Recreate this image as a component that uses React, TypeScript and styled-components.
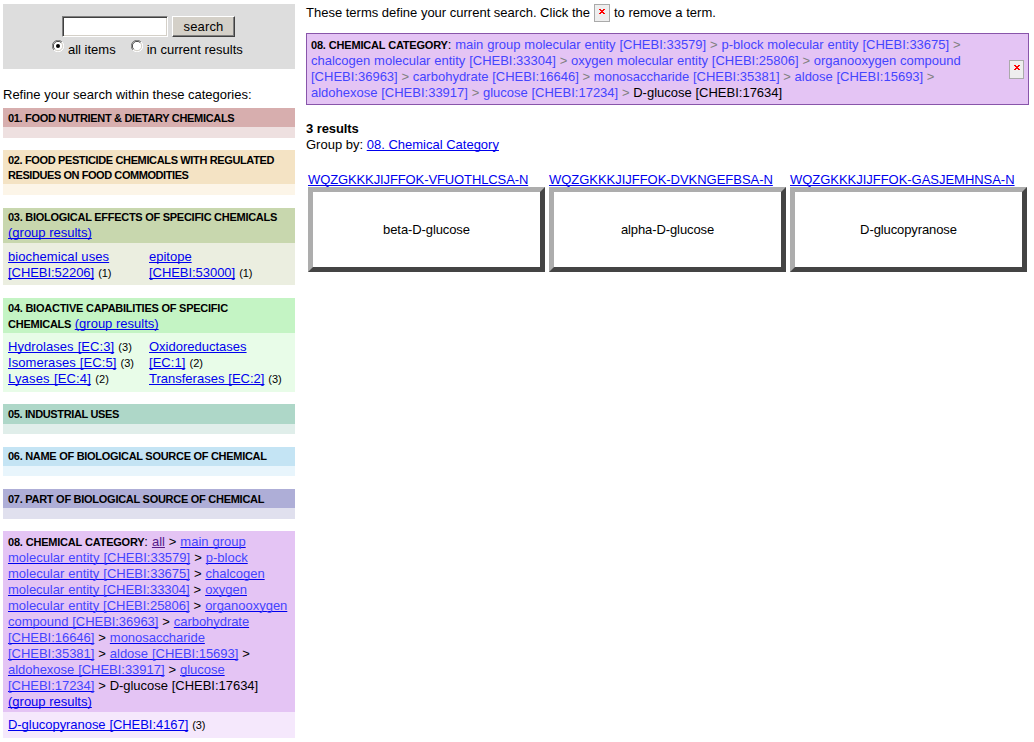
import React from "react";
import styled, { createGlobalStyle } from "styled-components";

const Global = createGlobalStyle`
  * { box-sizing: border-box; }
  body {
    margin: 0;
    background: #fff;
    color: #000;
    font: 13px/16px "Liberation Sans", Arial, sans-serif;
  }
`;

const Page = styled.div`
  display: flex;
  width: 1034px;
  height: 742px;
  overflow: hidden;
  padding: 4px 5px 0 3px;
`;

const Sidebar = styled.aside`
  flex: none;
  width: 292px;
  margin-right: 11px;
`;

const SearchPanel = styled.form`
  height: 65px;
  background: #ddd;
  padding-top: 12px;
`;

const SearchRow = styled.div`
  display: flex;
  padding-left: 59px;
  gap: 4px;
`;

const SearchInput = styled.input`
  width: 106px;
  height: 21px;
  padding: 0 2px;
  background: #fff;
  border: 1px solid;
  border-color: #808080 #fff #fff #808080;
  box-shadow: inset 1px 1px 0 #404040, inset -1px -1px 0 #d4d0c8;
  outline: none;
`;

const SearchButton = styled.button`
  width: 63px;
  height: 21px;
  padding: 0;
  background: #d4d0c8;
  border: 1px solid;
  border-color: #fff #404040 #404040 #fff;
  box-shadow: inset -1px -1px 0 #808080;
  font: 13px/17px "Liberation Sans", Arial, sans-serif;
  letter-spacing: 0.15px;
`;

const ScopeRow = styled.div`
  display: flex;
  padding-left: 49px;
`;

const Scope = styled.label<{ $gap?: number }>`
  display: flex;
  align-items: flex-start;
  gap: 4px;
  margin-left: ${(p) => p.$gap ?? 0}px;
  white-space: nowrap;
  line-height: 16px;
  padding-top: 5px;
  svg { margin-top: -2px; }
`;

const Refine = styled.div`
  margin: 18px 0 5px;
`;

const Category = styled.section<{ $after: number }>`
  margin-bottom: ${(p) => p.$after}px;
`;

const CategoryHead = styled.header<{ $bg: string; $h: number; $top?: number }>`
  height: ${(p) => p.$h}px;
  padding: ${(p) => p.$top ?? 2}px 0 0 5px;
  background: ${(p) => p.$bg};
`;

const CategoryBody = styled.div<{ $bg: string; $h: number; $top?: number }>`
  display: grid;
  grid-template-columns: 141px 1fr;
  height: ${(p) => p.$h}px;
  padding: ${(p) => p.$top ?? 6}px 0 0 5px;
  background: ${(p) => p.$bg};
`;

const Line = styled.div<{ $ls?: number; $ws?: number; $lh?: number }>`
  white-space: pre;
  letter-spacing: ${(p) => p.$ls ?? 0}px;
  word-spacing: ${(p) => p.$ws ?? 0}px;
  line-height: ${(p) => p.$lh ?? 16}px;
  height: ${(p) => p.$lh ?? 16}px;
`;

const Title = styled.b<{ $ls?: number }>`
  font-size: 11px;
  letter-spacing: ${(p) => p.$ls ?? -0.3}px;
`;

const Link = styled.a<{ $color?: string; $line?: string }>`
  color: ${(p) => p.$color ?? "#0000ee"};
  text-decoration: underline 1px ${(p) => p.$line ?? "#0000ee"};
  text-decoration-skip-ink: none;
  text-underline-offset: 1px;
`;

const Count = styled.small`
  font-size: 11px;
`;

const Term = styled.span`
  color: #4444ff;
`;

const Sep = styled.span`
  color: #808080;
`;

const Main = styled.main`
  flex: 1;
  min-width: 0;
`;

const Intro = styled.div`
  display: flex;
  height: 18px;
  line-height: 18px;
  gap: 4px;
  white-space: nowrap;
`;

const RemoveBox = styled.button<{ $w: number; $h: number }>`
  display: flex;
  align-items: flex-start;
  justify-content: center;
  flex: none;
  width: ${(p) => p.$w}px;
  height: ${(p) => p.$h}px;
  padding: 4px 0 0;
  background: #eee;
  border: 1px solid #aaa;
`;

const Constraint = styled.section`
  display: flex;
  justify-content: space-between;
  align-items: center;
  height: 72px;
  margin-top: 11px;
  padding: 0 4px;
  border: 1px solid #8855aa;
  background: #e4c4f4;
`;

const Summary = styled.div`
  margin-top: 16px;
`;

const Results = styled.div`
  display: grid;
  grid-template-columns: repeat(3, 237px);
  gap: 4px;
  margin: 19px 0 0 2px;
`;

const ResultName = styled.div`
  display: flex;
  align-items: center;
  justify-content: center;
  height: 85px;
  margin-top: -1px;
  border: 5px solid;
  border-color: #adadad #444 #444 #adadad;
  letter-spacing: -0.1px;
`;

const Radio = ({ checked }: { checked?: boolean }) => (
  <svg width="12" height="12" viewBox="0 0 12 12">
    <circle cx="6" cy="6" r="5" fill="#fff" />
    <path d="M1.9 10.1A5.5 5.5 0 0 1 10.1 1.9" fill="none" stroke="#808080" />
    <path d="M2.7 9.3A4.5 4.5 0 0 1 9.3 2.7" fill="none" stroke="#404040" />
    <path d="M9.3 2.7A4.5 4.5 0 0 1 2.7 9.3" fill="none" stroke="#d4d0c8" />
    <path d="M10.1 1.9A5.5 5.5 0 0 1 1.9 10.1" fill="none" stroke="#fff" />
    {checked && <circle cx="6" cy="6" r="2" fill="#000" />}
  </svg>
);

const Remove = ({ w, h }: { w: number; h: number }) => (
  <RemoveBox $w={w} $h={h} aria-label="remove">
    <svg width="6" height="5" viewBox="0 0 6 5" shapeRendering="crispEdges">
      <path d="M0 0h2v1h2v-1h2v1h-1v1h-1v1h1v1h1v1h-2v-1h-2v1h-2v-1h1v-1h1v-1h-1v-1h-1z" fill="#ff0000" />
    </svg>
  </RemoveBox>
);

const Group = () => <Link href="#">(group results)</Link>;

/* Breadcrumb trail, one entry per visual line; "*" marks a linked term. */
const trail: { ls: number; ws: number; parts: string[] }[] = [
  { ls: 0, ws: 0.4, parts: ["*molecular entity [CHEBI:33579]", " > ", "*p-block"] },
  { ls: -0.01, ws: 0.4, parts: ["*molecular entity [CHEBI:33675]", " > ", "*chalcogen"] },
  { ls: -0.02, ws: 0.4, parts: ["*molecular entity [CHEBI:33304]", " > ", "*oxygen"] },
  { ls: -0.02, ws: 0.4, parts: ["*molecular entity [CHEBI:25806]", " > ", "*organooxygen"] },
  { ls: -0.05, ws: 0.4, parts: ["*compound [CHEBI:36963]", " > ", "*carbohydrate"] },
  { ls: -0.03, ws: 0.4, parts: ["*[CHEBI:16646]", " > ", "*monosaccharide"] },
  { ls: -0.03, ws: 0.4, parts: ["*[CHEBI:35381]", " > ", "*aldose [CHEBI:15693]", " >"] },
  { ls: -0.03, ws: 0.4, parts: ["*aldohexose [CHEBI:33917]", " > ", "*glucose"] },
  { ls: -0.03, ws: 0.3, parts: ["*[CHEBI:17234]", " > D-glucose [CHEBI:17634]"] },
];

const terms: { ws: number; parts: string[] }[] = [
  { ws: 0.2, parts: ["chalcogen molecular entity [CHEBI:33304]", "oxygen molecular entity [CHEBI:25806]", "organooxygen compound"] },
  { ws: 0.05, parts: ["[CHEBI:36963]", "carbohydrate [CHEBI:16646]", "monosaccharide [CHEBI:35381]", "aldose [CHEBI:15693]", ""] },
];

const results = [
  { id: "WQZGKKKJIJFFOK-VFUOTHLCSA-N", name: "beta-D-glucose", ls: -0.11 },
  { id: "WQZGKKKJIJFFOK-DVKNGEFBSA-N", name: "alpha-D-glucose", ls: -0.03 },
  { id: "WQZGKKKJIJFFOK-GASJEMHNSA-N", name: "D-glucopyranose", ls: -0.03 },
];

export default function App() {
  return (
    <>
      <Global />
      <Page>
        <Sidebar>
          <SearchPanel>
            <SearchRow>
              <SearchInput />
              <SearchButton type="button">search</SearchButton>
            </SearchRow>
            <ScopeRow>
              <Scope><Radio checked />all items</Scope>
              <Scope $gap={15}><Radio />in current results</Scope>
            </ScopeRow>
          </SearchPanel>
          <Refine><Line>Refine your search within these categories:</Line></Refine>

          <Category $after={12}>
            <CategoryHead $bg="#d7aeae" $h={19}>
              <Line $lh={15}><Title $ls={-0.32}>01. FOOD NUTRIENT &amp; DIETARY CHEMICALS</Title></Line>
            </CategoryHead>
            <CategoryBody $bg="#eee0e0" $h={11} />
          </Category>
          <Category $after={13}>
            <CategoryHead $bg="#f4e3c4" $h={34}>
              <Line $lh={15}><Title $ls={-0.36}>02. FOOD PESTICIDE CHEMICALS WITH REGULATED</Title></Line>
              <Line $lh={15}><Title $ls={-0.43}>RESIDUES ON FOOD COMMODITIES</Title></Line>
            </CategoryHead>
            <CategoryBody $bg="#fcf5e8" $h={11} />
          </Category>
          <Category $after={13}>
            <CategoryHead $bg="#c8d7ae" $h={35} $top={1}>
              <Line $lh={15}><Title $ls={-0.27}>03. BIOLOGICAL EFFECTS OF SPECIFIC CHEMICALS</Title></Line>
              <Line $lh={18}><Group /></Line>
            </CategoryHead>
            <CategoryBody $bg="#ebeee0" $h={42}>
              <div>
                <Line $ls={0.09}><Link href="#">biochemical uses</Link></Line>
                <Line $ls={-0.05} $ws={0.5}><Link href="#">[CHEBI:52206]</Link> <Count>(1)</Count></Line>
              </div>
              <div>
                <Line><Link href="#">epitope</Link></Line>
                <Line $ls={-0.05} $ws={0.5}><Link href="#">[CHEBI:53000]</Link> <Count>(1)</Count></Line>
              </div>
            </CategoryBody>
          </Category>
          <Category $after={12}>
            <CategoryHead $bg="#c4f4c4" $h={35}>
              <Line $lh={15}><Title $ls={-0.24}>04. BIOACTIVE CAPABILITIES OF SPECIFIC</Title></Line>
              <Line $lh={18}><Title $ls={-0.25}>CHEMICALS</Title> <Group /></Line>
            </CategoryHead>
            <CategoryBody $bg="#e8fce8" $h={59}>
              <div>
                <Line $ls={0.06} $ws={0.4}><Link href="#">Hydrolases [EC:3]</Link> <Count>(3)</Count></Line>
                <Line $ls={0.06} $ws={0.4}><Link href="#">Isomerases [EC:5]</Link> <Count>(3)</Count></Line>
                <Line $ls={0.17} $ws={0.4}><Link href="#">Lyases [EC:4]</Link> <Count>(2)</Count></Line>
              </div>
              <div>
                <Line><Link href="#">Oxidoreductases</Link></Line>
                <Line $ls={0.03} $ws={0.5}><Link href="#">[EC:1]</Link> <Count>(2)</Count></Line>
                <Line $ws={0.3}><Link href="#">Transferases [EC:2]</Link> <Count>(3)</Count></Line>
              </div>
            </CategoryBody>
          </Category>
          <Category $after={13}>
            <CategoryHead $bg="#aed7c8" $h={20}>
              <Line $lh={15}><Title $ls={-0.36}>05. INDUSTRIAL USES</Title></Line>
            </CategoryHead>
            <CategoryBody $bg="#e0eeea" $h={10} />
          </Category>
          <Category $after={13}>
            <CategoryHead $bg="#c4e4f4" $h={19} $top={1}>
              <Line $lh={15}><Title $ls={-0.29}>06. NAME OF BIOLOGICAL SOURCE OF CHEMICAL</Title></Line>
            </CategoryHead>
            <CategoryBody $bg="#e8f5fc" $h={10} />
          </Category>
          <Category $after={12}>
            <CategoryHead $bg="#aeaed7" $h={19}>
              <Line $lh={15}><Title $ls={-0.27}>07. PART OF BIOLOGICAL SOURCE OF CHEMICAL</Title></Line>
            </CategoryHead>
            <CategoryBody $bg="#e0e0ee" $h={11} />
          </Category>
          <Category $after={0}>
            <CategoryHead $bg="#e4c4f4" $h={181} $top={3}>
              <Line $ws={0.3}>
                <Title $ls={-0.22}>08. CHEMICAL CATEGORY</Title>:{" "}
                <Link href="#" $color="#551a8b" $line="#551a8b">all</Link>{" > "}
                <Link href="#" $color="#4444ff">main group</Link>
              </Line>
              {trail.map((l) => (
                <Line key={l.parts[0]} $ls={l.ls} $ws={l.ws}>
                  {l.parts.map((p) =>
                    p[0] === "*" ? <Link key={p} href="#" $color="#4444ff">{p.slice(1)}</Link> : p
                  )}
                </Line>
              ))}
              <Line><Group /></Line>
            </CategoryHead>
            <CategoryBody $bg="#f5e8fc" $h={26} $top={5}>
              <Line $ls={-0.05} $ws={0.3}><Link href="#">D-glucopyranose [CHEBI:4167]</Link> <Count>(3)</Count></Line>
            </CategoryBody>
          </Category>
        </Sidebar>

        <Main>
          <Intro>
            <span>These terms define your current search. Click the</span>
            <Remove w={16} h={18} />
            <span>to remove a term.</span>
          </Intro>
          <Constraint>
            <div>
              <Line $ws={0.25}>
                <Title $ls={-0.2}>08. CHEMICAL CATEGORY</Title>:{" "}
                <Term>main group molecular entity [CHEBI:33579]</Term><Sep>{" > "}</Sep>
                <Term>p-block molecular entity [CHEBI:33675]</Term><Sep>{" >"}</Sep>
              </Line>
              {terms.map((l) => (
                <Line key={l.parts[0]} $ws={l.ws}>
                  {l.parts.map((p, i) => (
                    <React.Fragment key={i}>
                      {i > 0 && <Sep>{" > "}</Sep>}
                      <Term>{p}</Term>
                    </React.Fragment>
                  ))}
                </Line>
              ))}
              <Line $ws={0.1}>
                <Term>aldohexose [CHEBI:33917]</Term><Sep>{" > "}</Sep>
                <Term>glucose [CHEBI:17234]</Term><Sep>{" > "}</Sep>
                D-glucose [CHEBI:17634]
              </Line>
            </div>
            <Remove w={15} h={19} />
          </Constraint>
          <Summary>
            <Line $ls={-0.08}><b>3 results</b></Line>
            <Line>Group by: <Link href="#">08. Chemical Category</Link></Line>
          </Summary>
          <Results>
            {results.map((r) => (
              <div key={r.id}>
                <Line $ls={r.ls}><Link href="#">{r.id}</Link></Line>
                <ResultName>{r.name}</ResultName>
              </div>
            ))}
          </Results>
        </Main>
      </Page>
    </>
  );
}
